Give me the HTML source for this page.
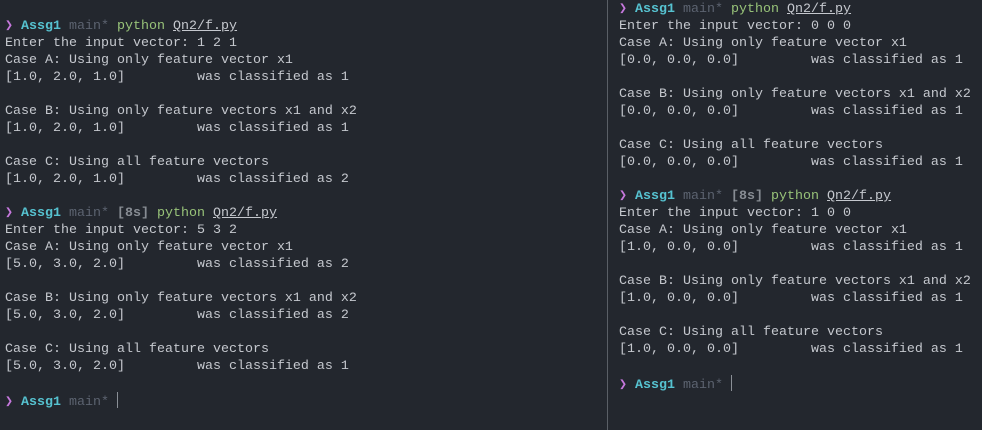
<!DOCTYPE html>
<html><head><meta charset="utf-8"><style>
html,body{margin:0;padding:0;background:#23272e;width:982px;height:430px;overflow:hidden}
.pane{position:absolute;top:0;font-family:"Liberation Mono",monospace;font-size:13.33px;line-height:17px;color:#c5c8ce;white-space:pre}
#l{left:5px;top:18px}
#r{left:619px;top:1px}
.div{position:absolute;left:607px;top:0;width:1px;height:430px;background:#5a5f66}
.a{color:#c678dd}.c{color:#56c2d0;font-weight:bold}.g{color:#5c6370}.p{color:#98c379}.u{text-decoration:underline}.t{color:#878c93;font-weight:bold}
.cur{display:inline-block;width:1px;height:16px;background:#8a8f96;vertical-align:-3px}
</style></head><body>
<div class="pane" id="l"><span class="a">❯</span> <span class="c">Assg1</span> <span class="g">main*</span> <span class="p">python</span> <span class="u">Qn2/f.py</span>
Enter the input vector: 1 2 1
Case A: Using only feature vector x1
[1.0, 2.0, 1.0]         was classified as 1

Case B: Using only feature vectors x1 and x2
[1.0, 2.0, 1.0]         was classified as 1

Case C: Using all feature vectors
[1.0, 2.0, 1.0]         was classified as 2

<span class="a">❯</span> <span class="c">Assg1</span> <span class="g">main*</span> <span class="t">[8s]</span> <span class="p">python</span> <span class="u">Qn2/f.py</span>
Enter the input vector: 5 3 2
Case A: Using only feature vector x1
[5.0, 3.0, 2.0]         was classified as 2

Case B: Using only feature vectors x1 and x2
[5.0, 3.0, 2.0]         was classified as 2

Case C: Using all feature vectors
[5.0, 3.0, 2.0]         was classified as 1

<span class="a">❯</span> <span class="c">Assg1</span> <span class="g">main*</span> <span class="cur"></span></div>
<div class="div"></div>
<div class="pane" id="r"><span class="a">❯</span> <span class="c">Assg1</span> <span class="g">main*</span> <span class="p">python</span> <span class="u">Qn2/f.py</span>
Enter the input vector: 0 0 0
Case A: Using only feature vector x1
[0.0, 0.0, 0.0]         was classified as 1

Case B: Using only feature vectors x1 and x2
[0.0, 0.0, 0.0]         was classified as 1

Case C: Using all feature vectors
[0.0, 0.0, 0.0]         was classified as 1

<span class="a">❯</span> <span class="c">Assg1</span> <span class="g">main*</span> <span class="t">[8s]</span> <span class="p">python</span> <span class="u">Qn2/f.py</span>
Enter the input vector: 1 0 0
Case A: Using only feature vector x1
[1.0, 0.0, 0.0]         was classified as 1

Case B: Using only feature vectors x1 and x2
[1.0, 0.0, 0.0]         was classified as 1

Case C: Using all feature vectors
[1.0, 0.0, 0.0]         was classified as 1

<span class="a">❯</span> <span class="c">Assg1</span> <span class="g">main*</span> <span class="cur"></span></div>
</body></html>
